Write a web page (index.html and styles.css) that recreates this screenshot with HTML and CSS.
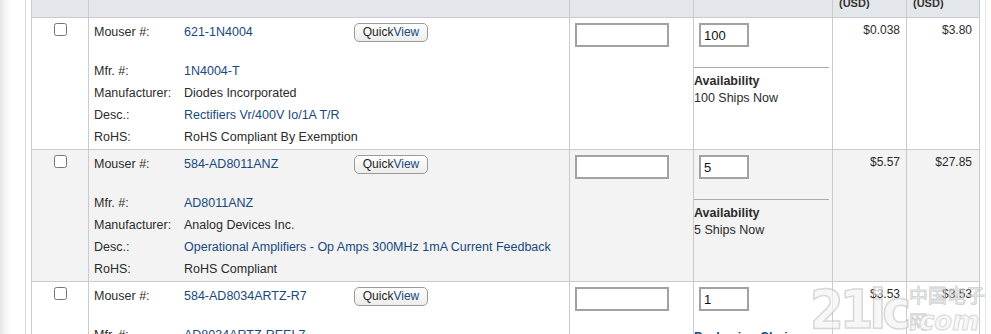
FILE: index.html
```html
<!DOCTYPE html>
<html lang="en">
<head>
<meta charset="utf-8">
<title>Cart</title>
<link rel="stylesheet" href="styles.css">
</head>
<body>
<div class="frame">
  <table class="parts">
    <colgroup>
      <col class="c-check"><col class="c-detail"><col class="c-cust"><col class="c-qty"><col class="c-price"><col class="c-ext">
    </colgroup>
    <thead>
      <tr>
        <th></th>
        <th>Part Details</th>
        <th>Customer #</th>
        <th>Quantity</th>
        <th>Unit Price<br>(USD)</th>
        <th>Ext. Price<br>(USD)</th>
      </tr>
    </thead>
    <tbody>
      <tr>
        <td class="chk"><input type="checkbox"></td>
        <td>
          <div class="detail">
            <span class="lbl">Mouser #:</span><a class="val link" href="#">621-1N4004</a><span class="qv-wrap"><button class="qv">Quick<span>View</span></button></span>
            <span class="lbl">Mfr. #:</span><a class="val wide link" href="#">1N4004-T</a>
            <span class="lbl">Manufacturer:</span><span class="val wide">Diodes Incorporated</span>
            <span class="lbl">Desc.:</span><a class="val wide link" href="#">Rectifiers Vr/400V Io/1A T/R</a>
            <span class="lbl">RoHS:</span><span class="val wide">RoHS Compliant By Exemption</span>
          </div>
        </td>
        <td class="cust"><input class="cust-in" type="text"></td>
        <td class="qty">
          <input class="qty-in" type="text" value="100">
          <div class="avail">
            <div class="avail-h">Availability</div>
            <div>100 Ships Now</div>
          </div>
        </td>
        <td class="price">$0.038</td>
        <td class="price ext">$3.80</td>
      </tr>
      <tr class="alt">
        <td class="chk"><input type="checkbox"></td>
        <td>
          <div class="detail">
            <span class="lbl">Mouser #:</span><a class="val link" href="#">584-AD8011ANZ</a><span class="qv-wrap"><button class="qv">Quick<span>View</span></button></span>
            <span class="lbl">Mfr. #:</span><a class="val wide link" href="#">AD8011ANZ</a>
            <span class="lbl">Manufacturer:</span><span class="val wide">Analog Devices Inc.</span>
            <span class="lbl">Desc.:</span><a class="val wide link" href="#">Operational Amplifiers - Op Amps 300MHz 1mA Current Feedback</a>
            <span class="lbl">RoHS:</span><span class="val wide">RoHS Compliant</span>
          </div>
        </td>
        <td class="cust"><input class="cust-in" type="text"></td>
        <td class="qty">
          <input class="qty-in" type="text" value="5">
          <div class="avail">
            <div class="avail-h">Availability</div>
            <div>5 Ships Now</div>
          </div>
        </td>
        <td class="price">$5.57</td>
        <td class="price ext">$27.85</td>
      </tr>
      <tr>
        <td class="chk"><input type="checkbox"></td>
        <td>
          <div class="detail">
            <span class="lbl">Mouser #:</span><a class="val link" href="#">584-AD8034ARTZ-R7</a><span class="qv-wrap"><button class="qv">Quick<span>View</span></button></span>
            <span class="lbl">Mfr. #:</span><a class="val wide link" href="#">AD8034ARTZ-REEL7</a>
            <span class="lbl">Manufacturer:</span><span class="val wide">Analog Devices Inc.</span>
            <span class="lbl">Desc.:</span><a class="val wide link" href="#">Operational Amplifiers - Op Amps Dual 80MHz</a>
            <span class="lbl">RoHS:</span><span class="val wide">RoHS Compliant</span>
          </div>
        </td>
        <td class="cust"><input class="cust-in" type="text"></td>
        <td class="qty">
          <input class="qty-in" type="text" value="1">
          <div class="pack"><a class="link bold" href="#">Packaging Choices</a></div>
        </td>
        <td class="price">$3.53</td>
        <td class="price ext">$3.53</td>
      </tr>
    </tbody>
  </table>
</div>
<div class="watermark" aria-hidden="true">
  <span class="wm-num">21ic</span>
  <span class="wm-cn">中国电子网</span>
  <span class="wm-com">.com</span>
</div>
</body>
</html>
```

FILE: styles.css
```css
html, body {
  margin: 0;
  padding: 0;
}
body {
  background: #fff linear-gradient(to right, #e6e6e6 0, #f6f6f6 6px, #fff 12px) no-repeat;
  background-size: 12px 100%;
  font-family: Arial, "Liberation Sans", sans-serif;
  font-size: 12.5px;
  color: #2b2b2b;
  overflow: hidden;
  height: 334px;
  position: relative;
}
.frame {
  margin: -23px 0 0 25px;
  width: 949px;
  padding: 0 5px;
  border-left: 1px solid #dcdcdc;
  border-right: 1px solid #e4e4e4;
  min-height: 420px;
  background: #fff;
}
.parts {
  border-collapse: collapse;
  table-layout: fixed;
  width: 949px;
}
.c-check { width: 57px; }
.c-detail { width: 481px; }
.c-cust { width: 124px; }
.c-qty { width: 139px; }
.c-price { width: 74px; }
.c-ext { width: 73px; }

.parts th {
  background: #e3e6ea;
  border: 1px solid #cbcbcb;
  border-top: none;
  vertical-align: top;
  text-align: left;
  font-size: 11px;
  font-weight: bold;
  line-height: 15px;
  padding: 4px 6px 6px;
  color: #333;
  white-space: nowrap;
}
.parts td {
  border: 1px solid #cbcbcb;
  vertical-align: top;
  padding: 0;
}
.parts tr.alt td {
  background: #f3f3f3;
}
.chk {
  text-align: center;
  padding-top: 5px !important;
}
.chk input {
  margin: 0;
  width: 13px;
  height: 13px;
}
.detail {
  display: grid;
  grid-template-columns: 90px 170px auto;
  grid-template-rows: 39px repeat(4, 22px);
  padding: 3px 6px 1px 5px;
  line-height: 22px;
  white-space: nowrap;
}
.lbl {
  color: #2b2b2b;
}
.val.wide {
  grid-column: 2 / 4;
}
.link {
  color: #17497e;
  text-decoration: none;
}
.bold {
  font-weight: bold;
}
.qv-wrap {
  padding-top: 2px;
}
.qv {
  font-family: Arial, "Liberation Sans", sans-serif;
  font-size: 12px;
  line-height: 15px;
  height: 19px;
  width: 74px;
  padding: 0;
  border: 1px solid #9a9a9a;
  border-radius: 5px;
  background: linear-gradient(#ffffff, #ececec);
  color: #222;
  display: block;
}
.qv span {
  color: #17497e;
}
.cust {
  padding: 5px 0 0 5px !important;
}
.cust-in, .qty-in {
  box-sizing: border-box;
  height: 24px;
  border: 2px solid #a2a2a2;
  background: #fff;
  margin: 0;
  display: block;
  font-family: Arial, "Liberation Sans", sans-serif;
  font-size: 13px;
  padding: 0 3px;
  color: #111;
}
.cust-in { width: 94px; }
.qty-in { width: 50px; margin-left: 5px; }
.qty {
  padding: 5px 3px 0 0 !important;
}
.avail {
  margin-top: 20px;
  border-top: 1px solid #ababab;
  padding-top: 5px;
  line-height: 17px;
  font-size: 12.5px;
  color: #2b2b2b;
}
.avail-h {
  font-weight: bold;
}
.pack {
  margin-top: 18px;
  line-height: 17px;
}
.price {
  text-align: right;
  font-size: 12px;
  line-height: 17px;
  padding: 4px 6px 0 0 !important;
  color: #2b2b2b;
}
.price.ext {
  padding-right: 7px !important;
}
.watermark {
  position: absolute;
  left: 810px;
  top: 282px;
  display: grid;
  grid-template-columns: auto auto;
  grid-template-rows: 26px 26px;
  column-gap: 2px;
  pointer-events: none;
  opacity: 0.7;
}
.wm-num {
  grid-row: 1 / 3;
  font-family: "DejaVu Sans Condensed", "Liberation Sans Narrow", sans-serif;
  font-weight: bold;
  font-size: 54px;
  line-height: 56px;
  color: #f4f4f4;
  -webkit-text-stroke: 1.5px #c8c8c8;
  letter-spacing: -4px;
}
.wm-cn {
  font-family: "Noto Sans CJK SC", sans-serif;
  font-size: 19px;
  line-height: 26px;
  color: #f4f4f4;
  -webkit-text-stroke: 1px #c4c4c4;
}
.wm-com {
  font-family: "DejaVu Sans", sans-serif;
  font-style: italic;
  font-weight: bold;
  font-size: 26px;
  line-height: 26px;
  color: #f4f4f4;
  -webkit-text-stroke: 1px #c8c8c8;
}
```
